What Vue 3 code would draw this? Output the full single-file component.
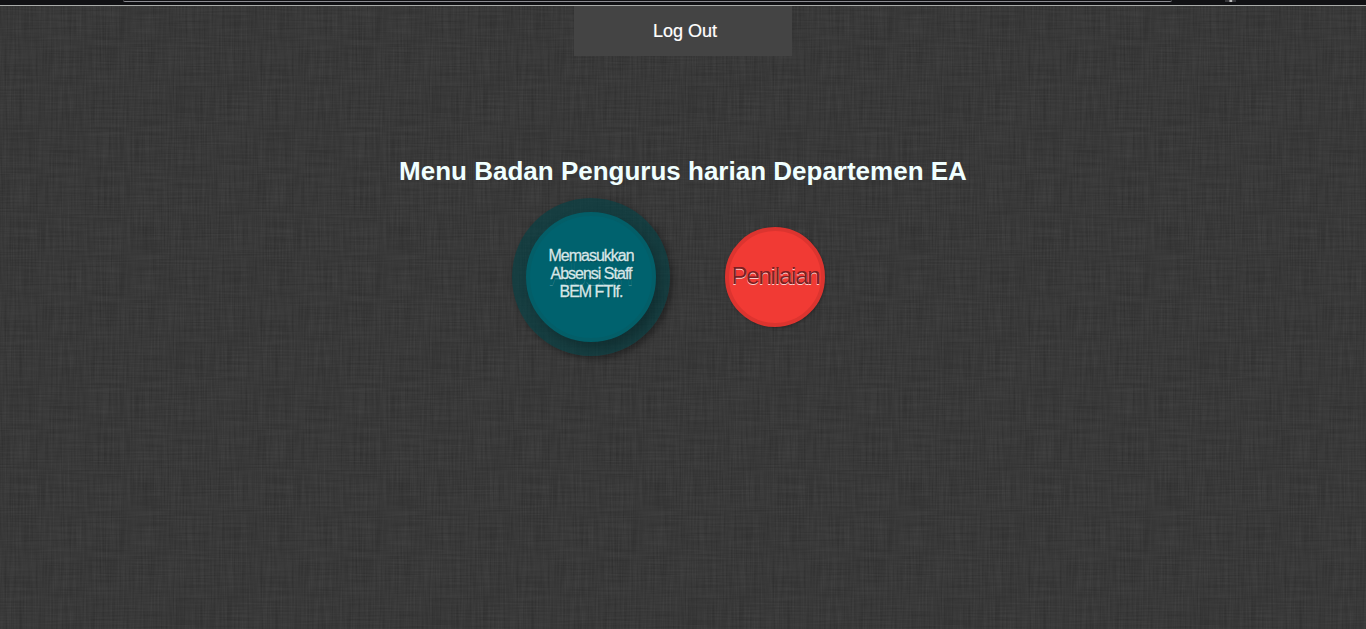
<script setup>
const items = [
  { title: 'Absen', text: ['Memasukkan', 'Absensi Staff', 'BEM FTIf.'], active: true },
  { title: 'Penilaian', text: [], active: false },
]
</script>

<template>
  <div class="page">
    <svg class="linen" width="1366" height="629" aria-hidden="true">
      <filter id="horizontal" filterUnits="userSpaceOnUse" x="0" y="0" width="1366" height="629" color-interpolation-filters="sRGB">
        <feTurbulence type="fractalNoise" baseFrequency="0.024 0.6" numOctaves="2" seed="4" stitchTiles="stitch" x="0" y="0" width="256" height="256" />
        <feTile />
        <feColorMatrix values="0.12 0 0 0 0.164  0.12 0 0 0 0.164  0.12 0 0 0 0.164  0 0 0 0 1" />
      </filter>
      <filter id="vertical" filterUnits="userSpaceOnUse" x="0" y="0" width="1366" height="629" color-interpolation-filters="sRGB">
        <feTurbulence type="fractalNoise" baseFrequency="0.6 0.024" numOctaves="2" seed="9" stitchTiles="stitch" x="0" y="0" width="256" height="256" />
        <feTile />
        <feColorMatrix values="0.12 0 0 0 0.164  0.12 0 0 0 0.164  0.12 0 0 0 0.164  0 0 0 0 1" />
      </filter>
      <rect width="1366" height="629" filter="url(#horizontal)" />
      <rect width="1366" height="629" filter="url(#vertical)" opacity=".5" />
    </svg>
    <div class="chrome">
      <span class="address"></span>
      <span class="knob"></span>
    </div>
    <nav class="nav"><a>Log Out</a></nav>
    <h1>Menu Badan Pengurus harian Departemen EA</h1>
    <ul class="menu">
      <li v-for="item in items" :key="item.title" :class="{ active: item.active }">
        <div class="circle">
          <span class="title">{{ item.title }}</span>
          <p v-if="item.text.length" class="desc">
            <span v-for="line in item.text" :key="line">{{ line }}</span>
          </p>
        </div>
      </li>
    </ul>
  </div>
</template>

<style>
body { background: #393939; }
</style>

<style scoped>
.page {
  position: relative;
  box-sizing: border-box;
  height: 629px;
  overflow: hidden;
  font-family: "Liberation Sans", Arial, sans-serif;
  color: #fff;
}
.linen { position: absolute; inset: 0; z-index: -1; }
.chrome {
  box-sizing: border-box;
  display: flex;
  height: 6px;
  background: #111114;
  border-bottom: 1px solid #a9aba9;
}
.address {
  box-sizing: border-box;
  width: 1049px;
  height: 2px;
  margin-left: 123px;
  border-bottom: 1px solid #8a8a90;
  border-radius: 0 0 2px 2px;
}
.knob {
  width: 11px;
  height: 2px;
  margin-left: 53px;
  background: linear-gradient(90deg, #38383c 35%, #bbb 45%, #bbb 60%, #38383c 70%);
}
.nav {
  box-sizing: border-box;
  width: 218px;
  height: 50px;
  margin: 0 auto;
  padding-left: 4px;
  background: #444;
  font-size: 18px;
  line-height: 50px;
  text-align: center;
  -webkit-text-stroke: .2px;
}
h1 {
  margin: 99px 0 0;
  color: azure;
  font-size: 26px;
  line-height: 32px;
  text-align: center;
}
.menu {
  display: flex;
  gap: 55px;
  align-items: center;
  margin: 11px 0 0 512px;
  padding: 0;
  list-style: none;
}
li { border-radius: 50%; }
li.active {
  padding: 14px;
  background: rgba(0, 65, 70, .6);
  box-shadow: 3px 3px 6px rgba(0, 0, 0, .32);
}
.circle {
  position: relative;
  box-sizing: border-box;
  display: flex;
  align-items: center;
  justify-content: center;
  width: 100px;
  height: 100px;
  border: 4px solid #dc342f;
  border-radius: 50%;
  background: #f13a34;
  box-shadow: 1px 1px 3px rgba(0, 0, 0, .25);
}
.active .circle {
  width: 130px;
  height: 130px;
  border-color: #035e68;
  background: #00626e;
  box-shadow: 5px 6px 12px rgba(0, 0, 0, .25);
}
.title {
  padding: 0 0 2px 1px;
  color: #7b2022;
  font-size: 24px;
  line-height: 30px;
  letter-spacing: -1.2px;
  white-space: nowrap;
  text-shadow: 0 1px 0 rgba(255, 255, 255, .75);
}
.active .title {
  padding: 0 0 5px;
  color: #00626e;
  font-size: 31px;
  letter-spacing: -1px;
  text-shadow: 0 1px 0 rgba(255, 255, 255, .22);
}
.desc {
  position: absolute;
  inset: 31px 0 auto;
  margin: 0;
  color: #d5e6e8;
  font-size: 16px;
  line-height: 18px;
  letter-spacing: -1px;
  text-align: center;
  text-shadow: 1px 1px 1px rgba(0, 0, 0, .3);
  -webkit-text-stroke: .3px;
}
.desc span { display: block; }
</style>
